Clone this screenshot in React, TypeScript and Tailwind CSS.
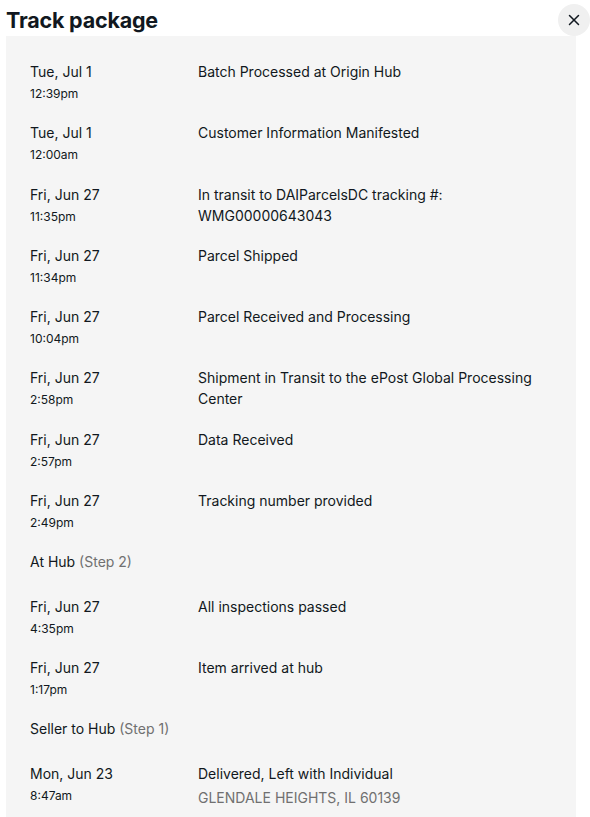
import { X } from "lucide-react";

type Event = { date: string; time: string; text: string[]; muted?: string };
type Section = { title?: string; step?: string; events: Event[] };

const sections: Section[] = [
  {
    events: [
      { date: "Tue, Jul 1", time: "12:39pm", text: ["Batch Processed at Origin Hub"] },
      { date: "Tue, Jul 1", time: "12:00am", text: ["Customer Information Manifested"] },
      {
        date: "Fri, Jun 27",
        time: "11:35pm",
        text: ["In transit to DAIParcelsDC tracking #:", "WMG00000643043"],
      },
      { date: "Fri, Jun 27", time: "11:34pm", text: ["Parcel Shipped"] },
      { date: "Fri, Jun 27", time: "10:04pm", text: ["Parcel Received and Processing"] },
      {
        date: "Fri, Jun 27",
        time: "2:58pm",
        text: ["Shipment in Transit to the ePost Global Processing Center"],
      },
      { date: "Fri, Jun 27", time: "2:57pm", text: ["Data Received"] },
      { date: "Fri, Jun 27", time: "2:49pm", text: ["Tracking number provided"] },
    ],
  },
  {
    title: "At Hub",
    step: "(Step 2)",
    events: [
      { date: "Fri, Jun 27", time: "4:35pm", text: ["All inspections passed"] },
      { date: "Fri, Jun 27", time: "1:17pm", text: ["Item arrived at hub"] },
    ],
  },
  {
    title: "Seller to Hub",
    step: "(Step 1)",
    events: [
      {
        date: "Mon, Jun 23",
        time: "8:47am",
        text: ["Delivered, Left with Individual"],
        muted: "GLENDALE HEIGHTS, IL 60139",
      },
    ],
  },
];

function EventRow({ event }: { event: Event }) {
  return (
    <div className="grid grid-cols-[168px_1fr]">
      <div>
        <div className="text-[14px] leading-[21px]">{event.date}</div>
        <div className="text-[12px] leading-[22px] mt-[1px]">{event.time}</div>
      </div>
      <div className="text-[14px] leading-[21px]">
        {event.text.map((line, i) => (
          <div key={i}>{line}</div>
        ))}
        {event.muted && <div className="text-[#707070] mt-[3px]">{event.muted}</div>}
      </div>
    </div>
  );
}

export default function App() {
  return (
    <div
      className="min-h-screen bg-white text-[#111820]"
      style={{ fontFamily: "Inter, 'Noto Sans', sans-serif" }}
    >
      <div className="flex items-center justify-between pl-[6px] pt-[4px]">
        <h1 className="text-[21.5px] font-bold leading-[32px] tracking-[-0.2px]">Track package</h1>
        <button className="w-[32px] h-[32px] rounded-full bg-[#f0f0f0] flex items-center justify-center">
          <X className="w-[18px] h-[18px] text-[#111820]" strokeWidth={2} />
        </button>
      </div>

      <div className="ml-[6px] mr-[14px] bg-[#f5f5f5] pl-[24px] pr-[24px] pt-[25px] pb-[20px] flex flex-col gap-[17.3px]">
        {sections.map((section, si) => (
          <div key={si} className="contents">
            {section.title && (
              <div className="text-[14px] leading-[21px] pb-[6px]">
                {section.title} <span className="text-[#707070]">{section.step}</span>
              </div>
            )}
            {section.events.map((event, ei) => (
              <EventRow key={ei} event={event} />
            ))}
          </div>
        ))}
      </div>
    </div>
  );
}
